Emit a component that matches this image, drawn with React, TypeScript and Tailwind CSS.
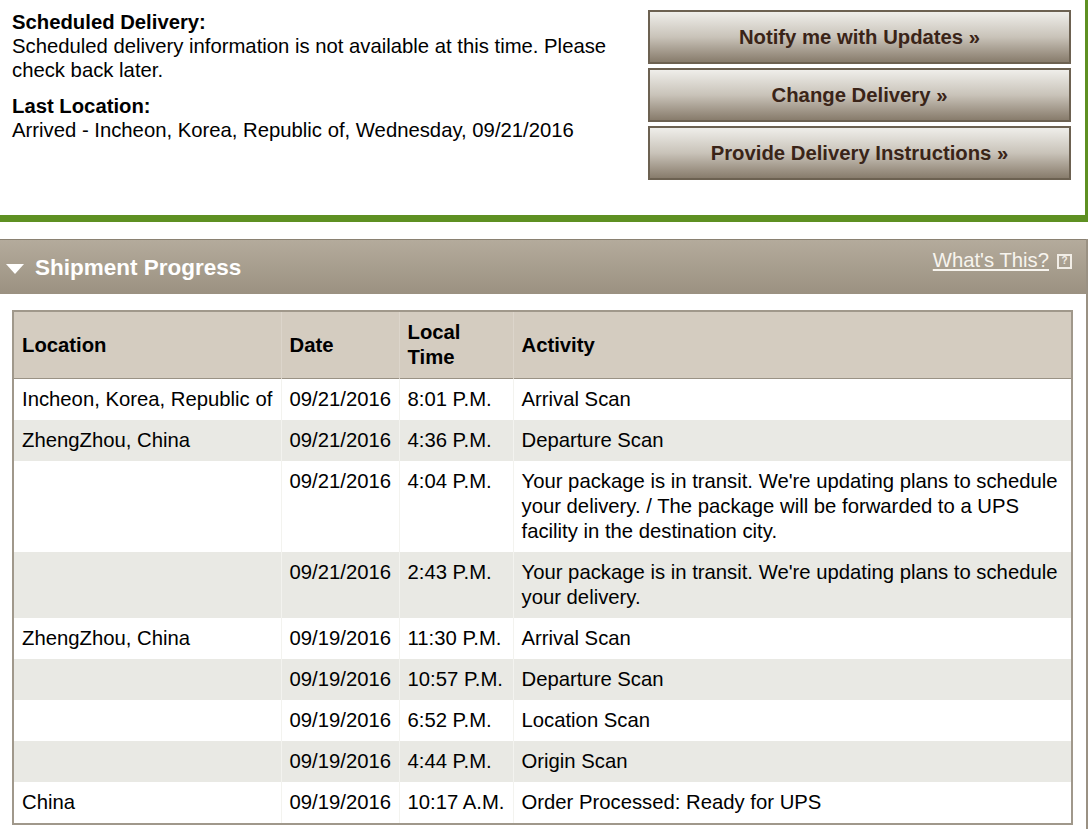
import { Fragment } from 'react'

type Row = {
  location: string
  date: string
  time: string
  activity: string
}

const rows: Row[] = [
  { location: 'Incheon, Korea, Republic of', date: '09/21/2016', time: '8:01 P.M.', activity: 'Arrival Scan' },
  { location: 'ZhengZhou, China', date: '09/21/2016', time: '4:36 P.M.', activity: 'Departure Scan' },
  {
    location: '',
    date: '09/21/2016',
    time: '4:04 P.M.',
    activity:
      "Your package is in transit. We're updating plans to schedule your delivery. / The package will be forwarded to a UPS facility in the destination city.",
  },
  {
    location: '',
    date: '09/21/2016',
    time: '2:43 P.M.',
    activity: "Your package is in transit. We're updating plans to schedule your delivery.",
  },
  { location: 'ZhengZhou, China', date: '09/19/2016', time: '11:30 P.M.', activity: 'Arrival Scan' },
  { location: '', date: '09/19/2016', time: '10:57 P.M.', activity: 'Departure Scan' },
  { location: '', date: '09/19/2016', time: '6:52 P.M.', activity: 'Location Scan' },
  { location: '', date: '09/19/2016', time: '4:44 P.M.', activity: 'Origin Scan' },
  { location: 'China', date: '09/19/2016', time: '10:17 A.M.', activity: 'Order Processed: Ready for UPS' },
]

const actions = ['Notify me with Updates »', 'Change Delivery »', 'Provide Delivery Instructions »']

function ActionButton({ label }: { label: string }) {
  return (
    <button
      type="button"
      className="flex h-[54px] w-full items-center justify-center border-2 border-[#6c6151] bg-linear-to-b from-[#efeeea] via-[#c9c3b9] to-[#887c6c] text-[20.3px] font-bold text-[#3a2418]"
    >
      {label}
    </button>
  )
}

export default function App() {
  return (
    <div className="w-[1088px] bg-white font-['Liberation_Sans',Arial,sans-serif] text-black">
      {/* Delivery summary */}
      <section className="flex h-[222px] border-r-[3px] border-b-[7px] border-[#5e9022] pt-[10px] pl-3">
        <div className="flex-1 pr-4 text-[20.3px] leading-[24px]">
          <p className="font-bold">Scheduled Delivery:</p>
          <p>Scheduled delivery information is not available at this time. Please check back later.</p>
          <p className="mt-[12px] font-bold">Last Location:</p>
          <p>Arrived - Incheon, Korea, Republic of, Wednesday, 09/21/2016</p>
        </div>
        <div className="mr-[14px] flex w-[423px] flex-col gap-[4px]">
          {actions.map((a) => (
            <ActionButton key={a} label={a} />
          ))}
        </div>
      </section>

      {/* Shipment progress */}
      <section className="mt-[17px] border-r-2 border-[#9a9183] pb-[9px]">
        <div className="flex h-[55px] items-start justify-between border-t border-[#8a8172] bg-linear-to-b from-[#b4ab9c] to-[#9b9181] pr-[14px]">
          <div className="flex items-center pt-[14px] pl-[6px]">
            <svg width="18" height="10" viewBox="0 0 18 10" className="mr-[11px] mt-[2px]">
              <polygon points="0,0 18,0 9,10" fill="#ffffff" />
            </svg>
            <h2 className="text-[22.5px] leading-[27px] font-bold text-white">Shipment Progress</h2>
          </div>
          <div className="flex items-center gap-2 pt-[8px]">
            <a href="#" className="text-[20.3px] leading-[24px] text-[#f7f4ee] underline underline-offset-2">
              What's This?
            </a>
            <span className="mt-[2px] flex h-[15px] w-[15px] items-center justify-center border-2 border-[#f1ede6] text-[10px] leading-none font-bold text-[#f1ede6]">
              ?
            </span>
          </div>
        </div>

        <div className="pt-4 pl-3">
          <table className="w-[1059px] table-fixed border-collapse border-2 border-[#a0988b] text-[20.3px] leading-[25px]">
            <colgroup>
              <col className="w-[268px]" />
              <col className="w-[118px]" />
              <col className="w-[114px]" />
              <col className="w-[559px]" />
            </colgroup>
            <thead>
              <tr className="border-b border-[#9a9285] bg-[#d4ccc0] font-bold">
                <th className="px-2 py-2 text-left align-middle">Location</th>
                <th className="border-l border-[#dcd5cb] px-2 py-2 text-left align-middle">Date</th>
                <th className="border-l border-[#dcd5cb] px-2 py-2 text-left align-middle">
                  Local
                  <br />
                  Time
                </th>
                <th className="border-l border-[#dcd5cb] px-2 py-2 text-left align-middle">Activity</th>
              </tr>
            </thead>
            <tbody>
              {rows.map((r, i) => (
                <Fragment key={i}>
                  <tr className={i % 2 === 1 ? 'bg-[#e9e9e4]' : 'bg-white'}>
                    <td className="px-2 py-2 align-top whitespace-nowrap">{r.location}</td>
                    <td className="border-l border-[#f3f3ef] px-2 py-2 align-top">{r.date}</td>
                    <td className="border-l border-[#f3f3ef] px-2 py-2 align-top whitespace-nowrap">{r.time}</td>
                    <td className="border-l border-[#f3f3ef] px-2 py-2 align-top">{r.activity}</td>
                  </tr>
                </Fragment>
              ))}
            </tbody>
          </table>
        </div>
      </section>
    </div>
  )
}
